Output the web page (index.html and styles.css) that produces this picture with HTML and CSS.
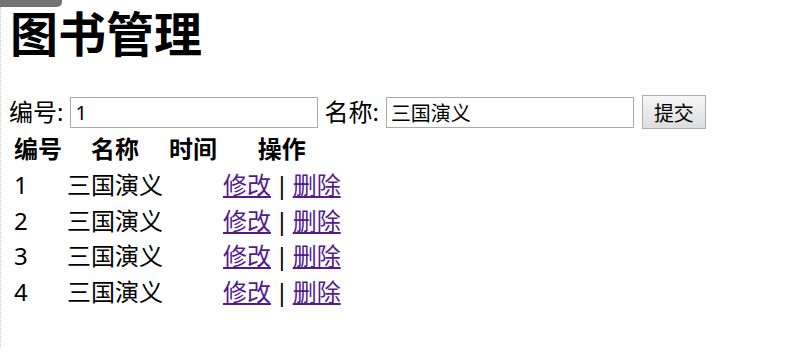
FILE: index.html
```html
<!DOCTYPE html>
<html>
<head>
<meta charset="UTF-8">
<title>图书管理</title>
<link rel="stylesheet" href="styles.css">
</head>
<body>
<div class="edge-tab"></div>
<div class="edge-line"></div>
<h1>图书管理</h1>
<form class="book-form">
	<label for="bid">编号:</label>
	<input type="text" id="bid" name="bid" value="1">
	<label for="bname">名称:</label>
	<input type="text" id="bname" name="bname" value="三国演义">
	<button type="button">提交</button>
</form>
<table class="book-list">
	<tr>
		<th class="c-id">编号</th>
		<th class="c-name">名称</th>
		<th class="c-time">时间</th>
		<th class="c-op">操作</th>
	</tr>
	<tr>
		<td>1</td>
		<td>三国演义</td>
		<td></td>
		<td class="op"><a href="#">修改</a> | <a href="#">删除</a></td>
	</tr>
	<tr>
		<td>2</td>
		<td>三国演义</td>
		<td></td>
		<td class="op"><a href="#">修改</a> | <a href="#">删除</a></td>
	</tr>
	<tr>
		<td>3</td>
		<td>三国演义</td>
		<td></td>
		<td class="op"><a href="#">修改</a> | <a href="#">删除</a></td>
	</tr>
	<tr>
		<td>4</td>
		<td>三国演义</td>
		<td></td>
		<td class="op"><a href="#">修改</a> | <a href="#">删除</a></td>
	</tr>
</table>
</body>
</html>
```
FILE: styles.css
```css
body{
	margin:0;
	padding:0 0 0 9px;
	font-family:"Noto Sans","Noto Sans CJK SC",sans-serif;
	font-size:24px;
	color:#000;
	background:#fff;
}
.edge-tab{
	position:absolute;
	left:0;
	top:0;
	width:62px;
	height:7px;
	background:#737373;
	border-bottom-right-radius:5px;
}
.edge-line{
	position:absolute;
	left:0;
	top:7px;
	width:1px;
	height:340px;
	border-left:1px dotted #c8c8c8;
}
h1{
	margin:0;
	padding-left:1px;
	font-size:48px;
	line-height:62px;
	font-family:"Noto Sans CJK SC",sans-serif;
}
.book-form{
	display:flex;
	align-items:center;
	margin-top:33px;
	height:34px;
}
.book-form label{
	line-height:34px;
	margin-right:7px;
}
.book-form input{
	width:248px;
	height:31px;
	box-sizing:border-box;
	border:1px solid #a9a9a9;
	padding:0 4px;
	font-family:"Noto Sans","Noto Sans CJK SC",sans-serif;
	font-size:20px;
	margin-right:6px;
}
.book-form button{
	width:64px;
	height:34px;
	box-sizing:border-box;
	border:1px solid #adadad;
	background:linear-gradient(#f6f6f6,#dddddd);
	font-family:"Noto Sans CJK SC",sans-serif;
	font-size:20px;
	padding:0;
	margin-left:2px;
}
.book-list{
	margin-top:1px;
	margin-left:1px;
	border-spacing:3px;
}
.book-list th,
.book-list td{
	padding:1px;
	line-height:30.75px;
	font-family:"Noto Sans","Noto Sans CJK SC",sans-serif;
}
.book-list td{
	text-align:left;
}
.book-list td.op{
	word-spacing:-2px;
}
.c-id{ width:48px; }
.c-name{ width:96px; }
.c-time{ width:50px; }
.book-list a{
	color:#551a8b;
}
```
